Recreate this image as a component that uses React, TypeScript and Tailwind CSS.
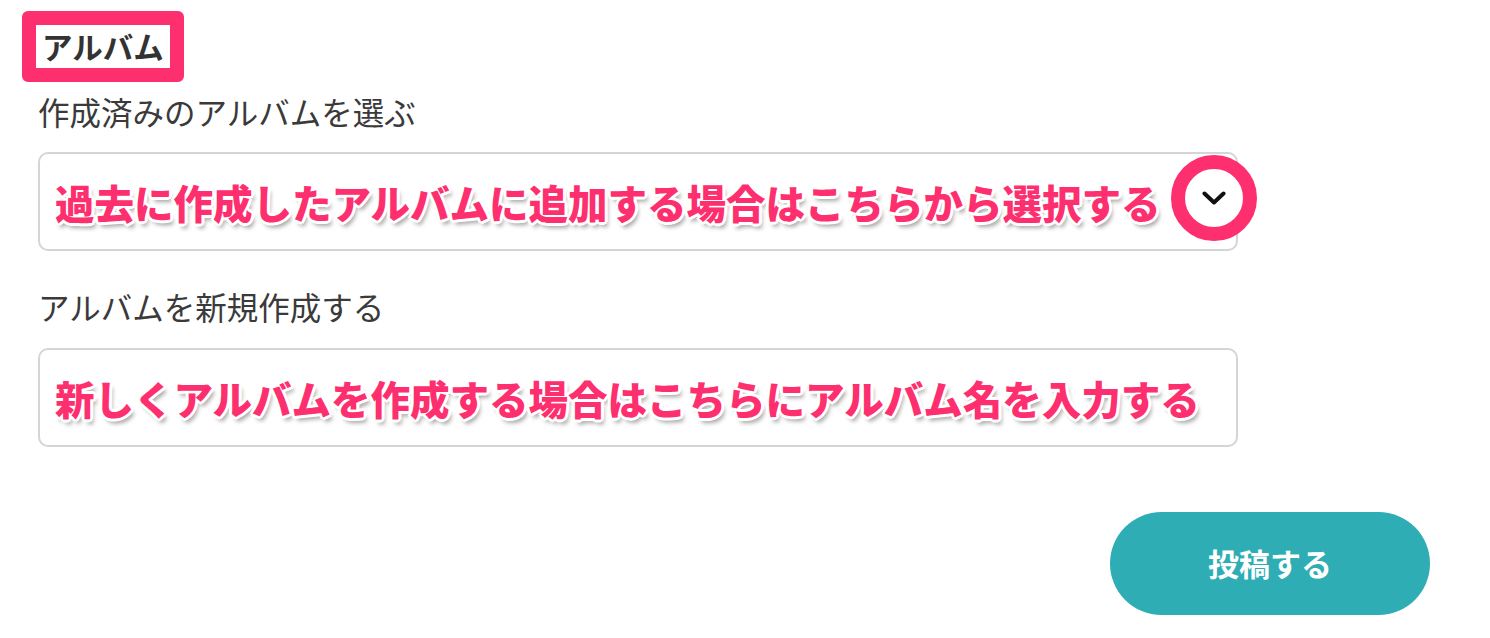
const JP = "font-['Noto_Sans_CJK_JP','Noto_Sans',sans-serif]";

// white outline + soft grey drop shadow used on the pink annotation text
const OUTLINE =
  "[text-shadow:3px_0_0_#fff,-3px_0_0_#fff,0_3px_0_#fff,0_-3px_0_#fff,2px_2px_0_#fff,-2px_2px_0_#fff,2px_-2px_0_#fff,-2px_-2px_0_#fff,3px_5px_4px_rgba(0,0,0,0.35)]";

function Note({ children }: { children: string }) {
  return (
    <span
      className={`${JP} ${OUTLINE} whitespace-nowrap text-[39.5px] font-black leading-none text-[#fe2f6f]`}
    >
      {children}
    </span>
  );
}

export default function App() {
  return (
    <div className={`${JP} min-h-screen w-full bg-white pl-[22px] pt-[11px]`}>
      <div className="inline-flex h-[71px] items-center rounded-md border-[14px] border-[#fe2f6f] bg-white px-[6px]">
        <h2 className="text-[30.5px] font-bold leading-none text-[#333]">アルバム</h2>
      </div>

      <div className="flex w-[1408px] flex-col pl-4">
        <label className="mt-[9px] text-[31.5px] leading-[40px] text-[#3a3a3a]">
          作成済みのアルバムを選ぶ
        </label>
        <div className="relative mt-[21px] flex h-[99px] w-[1200px] items-center rounded-[10px] border-2 border-[#d3d5da] pl-[15px]">
          <Note>過去に作成したアルバムに追加する場合はこちらから選択する</Note>
          <div className="absolute left-[1131px] top-[1px] flex h-[86px] w-[86px] items-center justify-center rounded-full border-[14px] border-[#fe2f6f] bg-white">
            <svg width="24" height="14" viewBox="0 0 24 14" fill="none">
              <path
                d="M2.5 2.5 L12 11.5 L21.5 2.5"
                stroke="#111"
                strokeWidth="4"
                strokeLinecap="round"
                strokeLinejoin="round"
              />
            </svg>
          </div>
        </div>

        <label className="mt-[35px] text-[31.5px] leading-[40px] text-[#3a3a3a]">
          アルバムを新規作成する
        </label>
        <div className="mt-[22px] flex h-[99px] w-[1200px] items-center rounded-[10px] border-2 border-[#d3d5da] pl-[15px]">
          <Note>新しくアルバムを作成する場合はこちらにアルバム名を入力する</Note>
        </div>

        <button className="mt-[65px] flex h-[103px] w-[320px] items-center justify-center self-end rounded-full bg-[#2fadb5] text-[31px] font-bold text-white">
          投稿する
        </button>
      </div>
    </div>
  );
}
